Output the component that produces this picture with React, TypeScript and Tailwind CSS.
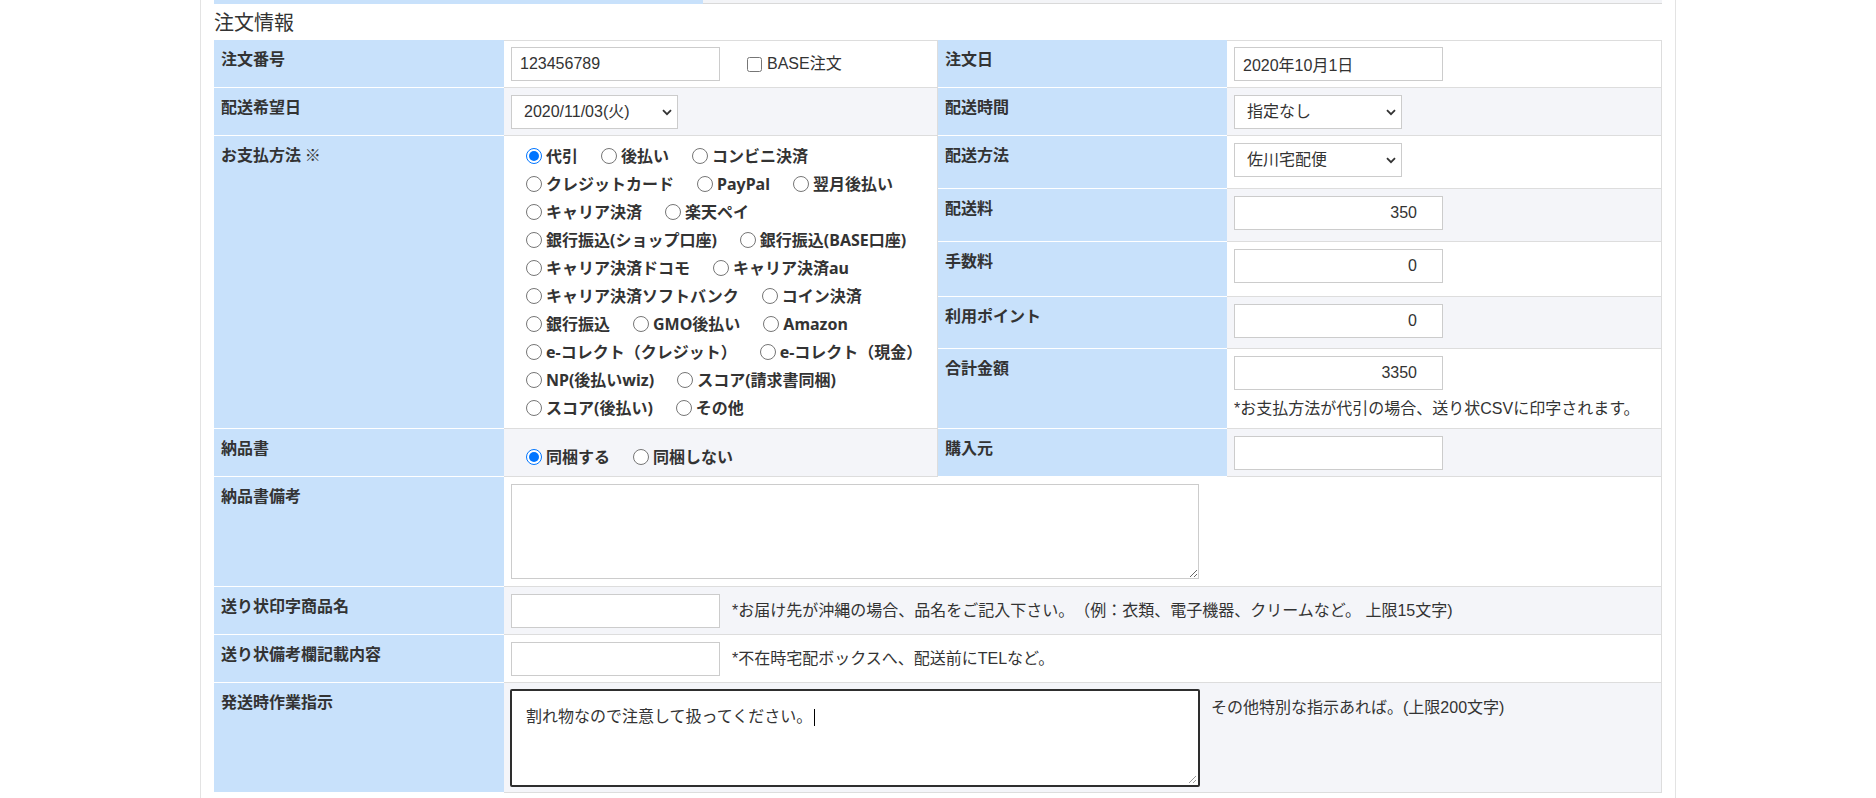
import React from 'react';

const HEAD =
  "bg-[#c8e1fb] border-b border-white pl-[7px] pt-[6px] text-[16px] leading-[25px] font-bold text-[#333] font-['Noto_Sans_CJK_JP',sans-serif]";
const CELL = 'border-b border-r border-[#dddddd] pl-[7px] pt-[7px]';
const INPUT =
  'block w-[209px] h-[34px] border border-[#cccccc] bg-white px-[8px] text-[16px] text-[#333] outline-none';
const NOTE = 'text-[16px] leading-[24px] text-[#333] whitespace-nowrap';

function Radio({ label, checked }: { label: string; checked?: boolean }) {
  return (
    <label className="flex items-center gap-[4px] mr-[23px] whitespace-nowrap">
      {checked ? (
        <span className="flex items-center justify-center w-[16px] h-[16px] rounded-full border border-[#0075ff] bg-white">
          <span className="w-[10px] h-[10px] rounded-full bg-[#0075ff]"></span>
        </span>
      ) : (
        <span className="w-[16px] h-[16px] rounded-full border border-[#767676] bg-white"></span>
      )}
      <span>{label}</span>
    </label>
  );
}

function Select({ value, width }: { value: string; width: string }) {
  return (
    <div className={`relative h-[34px] ${width}`}>
      <select
        defaultValue={value}
        className="appearance-none w-full h-full border border-[#cccccc] bg-white pl-[12px] text-[16px] text-[#333] outline-none"
      >
        <option value={value}>{value}</option>
      </select>
      <svg
        className="absolute right-[6px] top-[14px] pointer-events-none"
        width="10"
        height="7"
        viewBox="0 0 10 7"
      >
        <path d="M1 1.2l4 4 4-4" stroke="#333" strokeWidth="1.8" fill="none" />
      </svg>
    </div>
  );
}

const paymentRows: { label: string; checked?: boolean }[][] = [
  [{ label: '代引', checked: true }, { label: '後払い' }, { label: 'コンビニ決済' }],
  [{ label: 'クレジットカード' }, { label: 'PayPal' }, { label: '翌月後払い' }],
  [{ label: 'キャリア決済' }, { label: '楽天ペイ' }],
  [{ label: '銀行振込(ショップ口座)' }, { label: '銀行振込(BASE口座)' }],
  [{ label: 'キャリア決済ドコモ' }, { label: 'キャリア決済au' }],
  [{ label: 'キャリア決済ソフトバンク' }, { label: 'コイン決済' }],
  [{ label: '銀行振込' }, { label: 'GMO後払い' }, { label: 'Amazon' }],
  [{ label: 'e-コレクト（クレジット）' }, { label: 'e-コレクト（現金）' }],
  [{ label: 'NP(後払いwiz)' }, { label: 'スコア(請求書同梱)' }],
  [{ label: 'スコア(後払い)' }, { label: 'その他' }],
];

export default function App() {
  return (
    <div className="min-h-screen bg-white [text-spacing-trim:space-all]">
      <div className="mx-auto w-[1476px] h-[798px] border-x border-[#e3e3e3] px-[13px] font-['Liberation_Sans','Noto_Sans_CJK_JP',sans-serif] text-[#333]">
        {/* tab bar (cut off at top) */}
        <div className="flex h-[4px]">
          <div className="w-[489px] bg-[#c8e1fb]"></div>
          <div className="flex-1 bg-[#f3f4f7] border-b border-[#d9d9d9]"></div>
        </div>

        <h2 className="h-[36px] flex items-center text-[20px] font-normal text-[#333] font-['Noto_Sans_CJK_JP',sans-serif]">
          注文情報
        </h2>

        <div className="grid grid-cols-[290px_434px_289px_435px] grid-rows-[48px_48px_53px_53px_55px_52px_80px_48px_110px_48px_48px_110px]">
          {/* row 1 */}
          <div className={HEAD}>注文番号</div>
          <div className="border-t border-b border-r border-[#dddddd] pl-[7px] pt-[6px] bg-white flex items-start">
            <input type="text" defaultValue="123456789" className={INPUT} />
            <label className="flex items-center h-[34px] ml-[27px] gap-[5px] text-[16px]">
              <input type="checkbox" className="m-0 w-[15px] h-[15px]" />
              <span>BASE注文</span>
            </label>
          </div>
          <div className={HEAD}>注文日</div>
          <div className="border-t border-b border-r border-[#dddddd] pl-[7px] pt-[6px] bg-white">
            <input type="text" defaultValue="2020年10月1日" className={INPUT} />
          </div>

          {/* row 2 */}
          <div className={HEAD}>配送希望日</div>
          <div className={`${CELL} bg-[#f4f5f9]`}>
            <Select value="2020/11/03(火)" width="w-[167px]" />
          </div>
          <div className={HEAD}>配送時間</div>
          <div className={`${CELL} bg-[#f4f5f9]`}>
            <Select value="指定なし" width="w-[168px]" />
          </div>

          {/* payment methods */}
          <div className={`${HEAD} row-span-5`}>お支払方法 ※</div>
          <div className="row-span-5 border-b border-r border-[#dddddd] bg-white pl-[22px] pt-[6px] text-[16px] leading-[28px] font-bold font-['Noto_Sans','Noto_Sans_CJK_JP',sans-serif]">
            {paymentRows.map((row, i) => (
              <div key={i} className="flex">
                {row.map((r) => (
                  <Radio key={r.label} label={r.label} checked={r.checked} />
                ))}
              </div>
            ))}
          </div>
          <div className={HEAD}>配送方法</div>
          <div className={`${CELL} bg-white`}>
            <Select value="佐川宅配便" width="w-[168px]" />
          </div>
          <div className={HEAD}>配送料</div>
          <div className={`${CELL} bg-[#f4f5f9]`}>
            <input type="text" defaultValue="350" className={`${INPUT} text-right pr-[25px]`} />
          </div>
          <div className={HEAD}>手数料</div>
          <div className={`${CELL} bg-white`}>
            <input type="text" defaultValue="0" className={`${INPUT} text-right pr-[25px]`} />
          </div>
          <div className={HEAD}>利用ポイント</div>
          <div className={`${CELL} bg-[#f4f5f9]`}>
            <input type="text" defaultValue="0" className={`${INPUT} text-right pr-[25px]`} />
          </div>
          <div className={HEAD}>合計金額</div>
          <div className={`${CELL} bg-white`}>
            <input type="text" defaultValue="3350" className={`${INPUT} text-right pr-[25px]`} />
            <p className={`${NOTE} mt-[7px]`}>*お支払方法が代引の場合、送り状CSVに印字されます。</p>
          </div>

          {/* row 8 */}
          <div className={HEAD}>納品書</div>
          <div className="border-b border-r border-[#dddddd] bg-[#f4f5f9] pl-[22px] pt-[8px] text-[16px] leading-[28px] font-bold font-['Noto_Sans','Noto_Sans_CJK_JP',sans-serif] flex">
            <Radio label="同梱する" checked />
            <Radio label="同梱しない" />
          </div>
          <div className={HEAD}>購入元</div>
          <div className={`${CELL} bg-[#f4f5f9]`}>
            <input type="text" className={INPUT} />
          </div>

          {/* row 9 */}
          <div className={HEAD}>納品書備考</div>
          <div className={`${CELL} col-span-3 bg-white`}>
            <textarea className="block w-[688px] h-[95px] border border-[#cccccc] bg-white outline-none"></textarea>
          </div>

          {/* row 10 */}
          <div className={HEAD}>送り状印字商品名</div>
          <div className={`${CELL} col-span-3 bg-[#f4f5f9] flex items-start`}>
            <input type="text" className={INPUT} />
            <span className={`${NOTE} ml-[12px] mt-[5px]`}>
              *お届け先が沖縄の場合、品名をご記入下さい。（例：衣類、電子機器、クリームなど。 上限15文字)
            </span>
          </div>

          {/* row 11 */}
          <div className={HEAD}>送り状備考欄記載内容</div>
          <div className={`${CELL} col-span-3 bg-white flex items-start`}>
            <input type="text" className={INPUT} />
            <span className={`${NOTE} ml-[12px] mt-[5px]`}>*不在時宅配ボックスへ、配送前にTELなど。</span>
          </div>

          {/* row 12 */}
          <div className={HEAD}>発送時作業指示</div>
          <div className="col-span-3 border-b border-r border-[#dddddd] bg-[#f4f5f9] pl-[6px] pt-[6px] flex items-start">
            <div className="relative w-[690px] h-[98px] border-2 border-[#2e2e2e] rounded-[2px] bg-white px-[14px] pt-[14px] text-[16px] leading-[24px] text-[#333]">
              <span>割れ物なので注意して扱ってください。</span>
              <span className="inline-block align-middle w-px h-[17px] bg-black ml-[2px]"></span>
              <svg className="absolute right-[1px] bottom-[1px]" width="10" height="10" viewBox="0 0 10 10">
                <path d="M9 2L2 9M9 6L6 9" stroke="#999" strokeWidth="1" fill="none" />
              </svg>
            </div>
            <span className={`${NOTE} ml-[11px] mt-[7px]`}>その他特別な指示あれば。(上限200文字)</span>
          </div>
        </div>
      </div>
    </div>
  );
}
